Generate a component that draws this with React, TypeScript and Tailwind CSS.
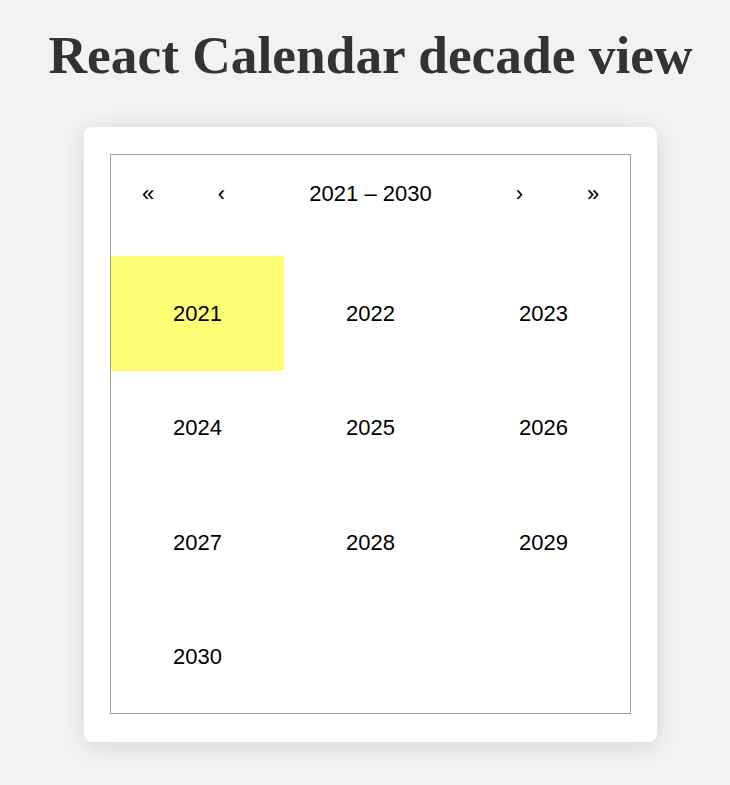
const years = [2021, 2022, 2023, 2024, 2025, 2026, 2027, 2028, 2029, 2030];

export default function App() {
  return (
    <div className="min-h-[785px] bg-[#f2f2f2] pl-[11px] flex flex-col items-center">
      <h1 className="mt-[25px] text-[53.4px] leading-[60px] font-bold text-[#333333] font-['Liberation_Serif',serif]">
        React Calendar decade view
      </h1>

      <div className="mt-[42px] bg-white rounded-lg px-[26px] pt-[27px] pb-[28px] shadow-[0_4px_24px_rgba(0,0,0,0.12)]">
        <div className="w-[521px] h-[560px] border border-[#a0a096] bg-white font-['Liberation_Sans',Arial,sans-serif] text-[22px] text-black">
          {/* navigation */}
          <div className="flex h-[76px] mb-[25px]">
            <button className="w-[74px] flex items-center justify-center">«</button>
            <button className="w-[73px] flex items-center justify-center">‹</button>
            <button className="flex-1 flex items-center justify-center">2021 – 2030</button>
            <button className="w-[73px] flex items-center justify-center">›</button>
            <button className="w-[74px] flex items-center justify-center">»</button>
          </div>

          {/* decade tiles */}
          <div className="grid grid-cols-3">
            {years.map((y) => (
              <button
                key={y}
                className={
                  "h-[114.5px] flex items-center justify-center " +
                  (y === 2021 ? "bg-[#ffff76]" : "")
                }
              >
                {y}
              </button>
            ))}
          </div>
        </div>
      </div>
    </div>
  );
}
